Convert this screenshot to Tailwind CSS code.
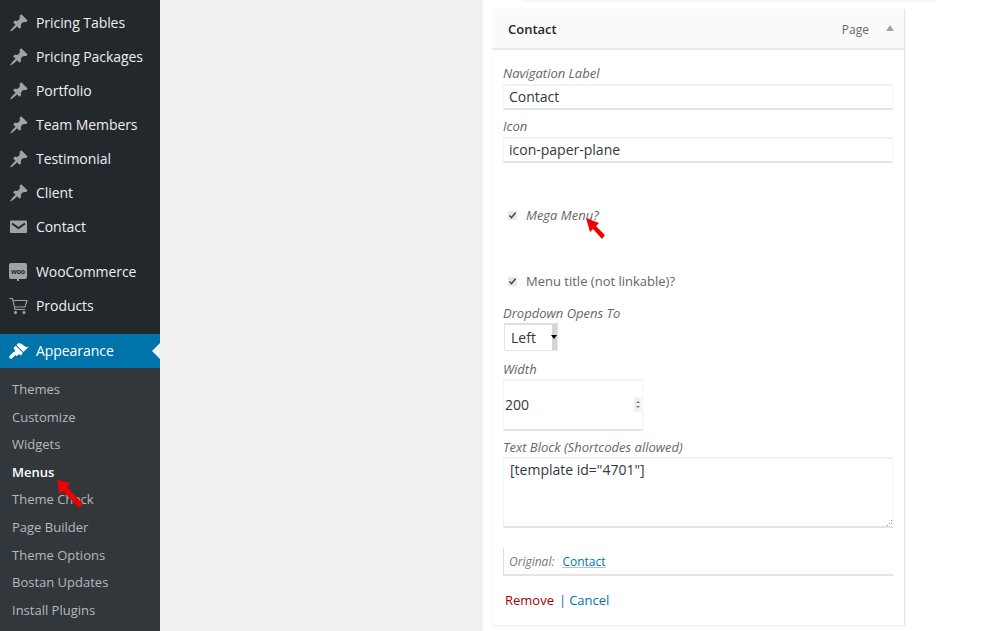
<!DOCTYPE html>
<html lang="en">
<head>
    <meta charset="UTF-8">
    <title>Menus</title>
    <script src="https://cdn.jsdelivr.net/npm/@tailwindcss/browser@4"></script>
</head>
<body class="bg-white">
<svg class="hidden">
    <symbol id="pin" viewBox="0 0 20 20"><path d="M10.44 3.02l1.82-1.82 6.36 6.35-1.83 1.82c-1.05-.68-2.48-.57-3.41.36l-.75.75c-.92.93-1.04 2.35-.35 3.41l-1.83 1.82-2.41-2.41-2.8 2.79c-.42.42-3.38 2.71-3.8 2.29s1.86-3.39 2.28-3.81l2.79-2.79L4.1 9.36l1.83-1.82c1.05.69 2.48.57 3.4-.36l.75-.75c.93-.92 1.05-2.35.36-3.41z" fill="#9ea3a8"/></symbol>
</svg>

<div class="relative flex h-[631px] w-[981px] overflow-hidden font-['Open_Sans',sans-serif]">

    <!-- admin sidebar -->
    <aside class="flex h-full w-[160px] shrink-0 flex-col bg-[#23282d] pt-[6px] text-[14px] tracking-[-0.06px] text-[#eeeeee]">
        <a class="flex h-[34px] items-center pb-[2px]"><svg class="ml-[9px] mr-[7px] mt-[2px] h-[20px] w-[20px]"><use href="#pin"/></svg>Pricing Tables</a>
        <a class="flex h-[34px] items-center pb-[2px]"><svg class="ml-[9px] mr-[7px] mt-[2px] h-[20px] w-[20px]"><use href="#pin"/></svg>Pricing Packages</a>
        <a class="flex h-[34px] items-center pb-[2px]"><svg class="ml-[9px] mr-[7px] mt-[2px] h-[20px] w-[20px]"><use href="#pin"/></svg>Portfolio</a>
        <a class="flex h-[34px] items-center pb-[2px]"><svg class="ml-[9px] mr-[7px] mt-[2px] h-[20px] w-[20px]"><use href="#pin"/></svg>Team Members</a>
        <a class="flex h-[34px] items-center pb-[2px]"><svg class="ml-[9px] mr-[7px] mt-[2px] h-[20px] w-[20px]"><use href="#pin"/></svg>Testimonial</a>
        <a class="flex h-[34px] items-center pb-[2px]"><svg class="ml-[9px] mr-[7px] mt-[2px] h-[20px] w-[20px]"><use href="#pin"/></svg>Client</a>
        <a class="flex h-[34px] items-center pb-[2px]">
            <svg class="ml-[9px] mr-[7px] mt-[2px] h-[20px] w-[20px]" viewBox="0 0 20 20"><rect x="1" y="3.5" width="17" height="12.5" rx="1" fill="#9ea3a8"/><path d="M3 6.5l6.5 4.5L16 6.5" fill="none" stroke="#23282d" stroke-width="2"/></svg>
            Contact
        </a>
        <a class="mt-[11px] flex h-[34px] items-center pb-[2px]">
            <span class="relative ml-[9px] mr-[9px] flex h-[16px] w-[18px] items-center justify-center rounded-[2px] bg-[#9ea3a8] text-[7px] font-bold leading-none tracking-[-0.3px] text-[#23282d]">woo<span class="absolute -bottom-[2px] left-[8px] h-[2px] w-[2px] bg-[#9ea3a8]"></span></span>
            WooCommerce
        </a>
        <a class="flex h-[34px] items-center pb-[2px]">
            <svg class="ml-[9px] mr-[7px] mt-[2px] h-[20px] w-[20px]" viewBox="0 0 20 20" fill="none" stroke="#9ea3a8" stroke-width="1.1"><path d="M0.5 2.5h3l2.5 11h10M4 4.5h14l-2 6.5H5.5"/><circle cx="6.5" cy="16.5" r="1" fill="#9ea3a8"/><circle cx="15" cy="16.5" r="1" fill="#9ea3a8"/></svg>
            Products
        </a>
        <a class="relative mt-[11px] flex h-[34px] items-center bg-[#0073aa] pb-[2px] text-white">
            <svg class="ml-[9px] mr-[7px] mt-[2px] h-[20px] w-[20px]" viewBox="0 0 20 20" fill="#ffffff"><path d="M14.48 11.06L7.41 3.99l1.5-1.5c.5-.56 2.3-.47 3.51.32 1.21.8 1.43 1.28 2.91 2.1 1.18.64 2.45 1.26 4.45.85zm-.71.71L6.7 4.7 4.93 6.47c-.39.39-.39 1.02 0 1.41l1.06 1.06c.39.39.39 1.03 0 1.42l-1.6 1.6 3.3 3.3 1.6-1.6c.39-.39 1.03-.39 1.42 0l.35.35c.39.39 1.02.39 1.41 0z"/><path d="M5.5 12.5L2 16" stroke="#ffffff" stroke-width="3.4" stroke-linecap="round"/></svg>
            Appearance
            <span class="absolute right-0 top-[9px] h-0 w-0 border-y-[8px] border-r-[8px] border-y-transparent border-r-[#f1f1f1]"></span>
        </a>
        <nav class="flex flex-1 flex-col bg-[#32373c] pt-[8px] text-[13px] tracking-normal text-[#b4b9be]">
            <a class="flex h-[27.6px] items-center pl-[12px]">Themes</a>
            <a class="flex h-[27.6px] items-center pl-[12px]">Customize</a>
            <a class="flex h-[27.6px] items-center pl-[12px]">Widgets</a>
            <a class="flex h-[27.6px] items-center pl-[12px] font-semibold text-white">Menus</a>
            <a class="flex h-[27.6px] items-center pl-[12px]">Theme Check</a>
            <a class="flex h-[27.6px] items-center pl-[12px]">Page Builder</a>
            <a class="flex h-[27.6px] items-center pl-[12px]">Theme Options</a>
            <a class="flex h-[27.6px] items-center pl-[12px]">Bostan Updates</a>
            <a class="flex h-[27.6px] items-center pl-[12px]">Install Plugins</a>
        </nav>
    </aside>

    <!-- empty left column of the menu screen -->
    <div class="w-[323px] shrink-0 bg-[#f1f1f1]"></div>

    <!-- menu item settings -->
    <main class="flex-1 bg-white">
        <div class="ml-[40px] h-[2px] w-[414px] bg-[#f8f8f8]"></div>
        <section class="ml-[10px] mt-[7px] w-[412px] border-r border-[#e5e5e5] bg-white shadow-[0_1px_2px_rgba(0,0,0,0.08)]">
            <header class="flex h-[41px] items-center border-b-2 border-[#e8e8e8] bg-[#fafafa] pl-[15px] pr-[10px] pt-[2px]">
                <span class="flex-1 text-[13px] font-semibold text-[#23282d]">Contact</span>
                <span class="text-[12px] text-[#666666]">Page</span>
                <span class="mb-[3px] ml-[17px] h-0 w-0 border-x-[4px] border-b-[6px] border-x-transparent border-b-[#a0a5aa]"></span>
            </header>
            <form class="flex flex-col pb-[16px] pl-[10px] text-[13px] leading-[18px] text-[#666666]">
                <label class="mt-[14px] h-[18px] italic">Navigation Label</label>
                <input value="Contact" class="mt-[2px] h-[26px] w-[390px] border-x border-b-2 border-t-2 border-x-[#f3f3f3] border-b-[#e4e4e4] border-t-[#f3f3f3] px-[5px] pb-[2px] text-[14px] text-[#32373c] outline-none">
                <label class="mt-[7px] h-[18px] italic">Icon</label>
                <input value="icon-paper-plane" class="mt-[2px] h-[26px] w-[390px] border-x border-b-2 border-t-2 border-x-[#f3f3f3] border-b-[#e4e4e4] border-t-[#f3f3f3] px-[5px] pb-[2px] text-[14px] text-[#32373c] outline-none">

                <label class="mt-[43px] flex h-[18px] items-center italic">
                    <svg class="ml-[5px] mr-[9px] h-[9px] w-[9px]" viewBox="0 0 9 9"><rect width="9" height="9" fill="#e8e8e8"/><path d="M1.5 4.5l2 2.2 4-5" fill="none" stroke="#444444" stroke-width="1.5"/></svg>
                    Mega Menu?
                </label>
                <label class="mt-[48px] flex h-[18px] items-center">
                    <svg class="ml-[5px] mr-[9px] h-[9px] w-[9px]" viewBox="0 0 9 9"><rect width="9" height="9" fill="#e8e8e8"/><path d="M1.5 4.5l2 2.2 4-5" fill="none" stroke="#444444" stroke-width="1.5"/></svg>
                    Menu title (not linkable)?
                </label>

                <label class="mt-[14px] h-[18px] italic">Dropdown Opens To</label>
                <div class="relative ml-[1px] mt-[1px] h-[28px] w-[54px] border-x border-b border-t-2 border-x-[#e4e4e4] border-b-[#e4e4e4] border-t-[#dddddd]">
                    <select class="h-full w-full appearance-none pl-[6px] text-[14px] leading-[24px] text-[#32373c] outline-none"><option>Left</option></select>
                    <span class="absolute bottom-0 right-0 top-0 w-[5px] bg-[#d4d4d4]"></span>
                    <span class="absolute right-0 top-[10px] h-0 w-0 border-x-[3px] border-t-[4px] border-x-transparent border-t-black"></span>
                </div>

                <label class="mt-[9px] h-[18px] italic">Width</label>
                <div class="relative mt-[1px] flex h-[52px] w-[140px] items-center border-x border-b-2 border-t-2 border-x-[#f3f3f3] border-b-[#e4e4e4] border-t-[#f3f3f3] text-[14px] text-[#32373c]">
                    <input value="200" class="w-full pl-[1px] outline-none">
                    <span class="absolute right-[1px] top-[16px] flex h-[15px] w-[7px] flex-col items-center justify-center gap-[3px] bg-[#f0f0f0]">
                        <span class="h-0 w-0 border-x-[2px] border-b-[2px] border-x-transparent border-b-[#777777]"></span>
                        <span class="h-0 w-0 border-x-[2px] border-t-[2px] border-x-transparent border-t-[#777777]"></span>
                    </span>
                </div>

                <label class="mt-[7px] h-[18px] italic">Text Block (Shortcodes allowed)</label>
                <div class="relative mt-[1px] h-[71px] w-[390px]">
                    <textarea class="h-full w-full resize-none border-x border-b-2 border-t-2 border-x-[#f3f3f3] border-b-[#e4e4e4] border-t-[#f3f3f3] px-[6px] py-[1px] text-[14px] leading-[20px] text-[#32373c] outline-none">[template id="4701"]</textarea>
                    <svg class="absolute bottom-[2px] right-0 h-[6px] w-[6px]" viewBox="0 0 6 6" fill="#999999"><rect x="4" y="0" width="1" height="1"/><rect x="2" y="3" width="1" height="1"/><rect x="4" y="3" width="1" height="1"/><rect x="0" y="5" width="1" height="1"/></svg>
                </div>

                <div class="mt-[20px] flex h-[28px] w-[390px] items-center border-b-2 border-l border-b-[#e4e4e4] border-l-[#dddddd] pl-[5px] pt-[2px] text-[12px]">
                    <span class="italic text-[#72777c]">Original:</span>
                    <a class="ml-[8px] text-[#0073aa] underline decoration-[#9ec8dc]">Contact</a>
                </div>
                <div class="mt-[15px] flex h-[18px] items-center pl-[2px]">
                    <a class="text-[#a00000]">Remove</a>
                    <span class="ml-[5px] mr-[3px] text-[#0073aa]">|</span>
                    <a class="text-[#0073aa]">Cancel</a>
                </div>
            </form>
        </section>
    </main>

    <!-- red annotation arrows -->
    <svg class="absolute left-[50px] top-[472px] h-[40px] w-[40px]" viewBox="0 0 40 40"><path d="M7 8l13 3-3 4 16 17-4 4-16-17-3 4z" fill="#f00000"/></svg>
    <svg class="absolute left-[580px] top-[210px] h-[32px] w-[32px]" viewBox="0 0 32 32"><path d="M6 8l13 5-3 3 9 9-3 4-9-10-3 3z" fill="#f00000"/></svg>
</div>
</body>
</html>
